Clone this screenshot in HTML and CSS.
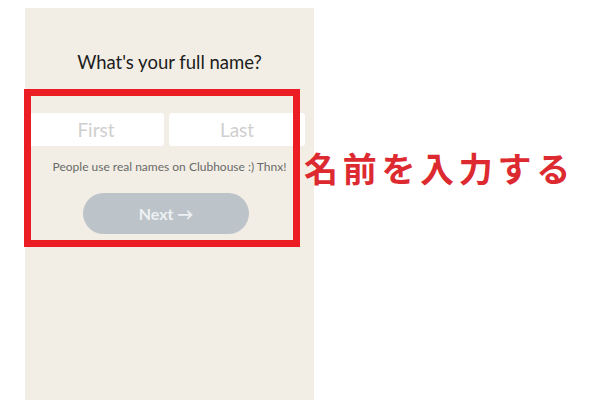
FILE: index.html
```html
<!DOCTYPE html>
<html lang="ja">
<head>
  <meta charset="UTF-8">
  <title>Clubhouse 名前入力</title>
  <link rel="stylesheet" href="styles.css">
</head>
<body>
  <div class="page">
    <div class="phone">
      <h1 class="title">What's your full name?</h1>

      <div class="name-row">
        <input class="name-input" type="text" placeholder="First">
        <input class="name-input" type="text" placeholder="Last">
      </div>

      <p class="hint">People use real names on Clubhouse :) Thnx!</p>

      <button class="next-btn">Next →</button>

      <!-- 赤枠の注釈 -->
      <div class="mark"></div>
    </div>

    <div class="note">名前を入力する</div>
  </div>
</body>
</html>
```

FILE: styles.css
```css
body {
  margin: 0;
  background-color: #fff;
  font-family: Lato, "Noto Sans", sans-serif;
}

.page {
  display: flex;
  align-items: flex-start;
  height: 400px;
  overflow: hidden;
}

.phone {
  position: relative;
  width: 289px;
  height: 392px;
  margin: 8px 0 0 25px;
  background-color: #f2eee5;
  display: flex;
  flex-direction: column;
  align-items: center;
}

.title {
  margin: 43px 0 0;
  font-size: 18.5px;
  font-weight: 400;
  color: #1c1c1c;
}

.name-row {
  display: flex;
  gap: 5px;
  margin-top: 40px;
  margin-left: -6px;
}

.name-input {
  width: 136px;
  height: 33px;
  padding: 0;
  border: none;
  border-radius: 3px;
  background-color: #fff;
  font-family: Lato, sans-serif;
  font-size: 19px;
  text-align: center;
  outline: none;
}

.name-input::placeholder {
  color: #cfcfcf;
}

.hint {
  margin: 13px 0 0;
  font-size: 12px;
  color: #6a6a6a;
}

.next-btn {
  width: 166px;
  height: 41px;
  margin: 19px 7px 0 0;
  border: none;
  border-radius: 21px;
  background-color: #bcc4ca;
  color: #eef1f3;
  font-family: Lato, sans-serif;
  font-size: 16px;
  font-weight: 700;
}

.mark {
  position: absolute;
  left: -1px;
  top: 81px;
  width: 262px;
  height: 144px;
  border: 7px solid #ec1c24;
}

/* 注釈テキストはパネルの上に重ねる */
.note {
  position: relative;
  z-index: 1;
  margin: 143px 0 0 -10px;
  font-family: "Noto Sans CJK JP", sans-serif;
  font-size: 34px;
  font-weight: 700;
  letter-spacing: 4.7px;
  color: #dc2a30;
}
```
